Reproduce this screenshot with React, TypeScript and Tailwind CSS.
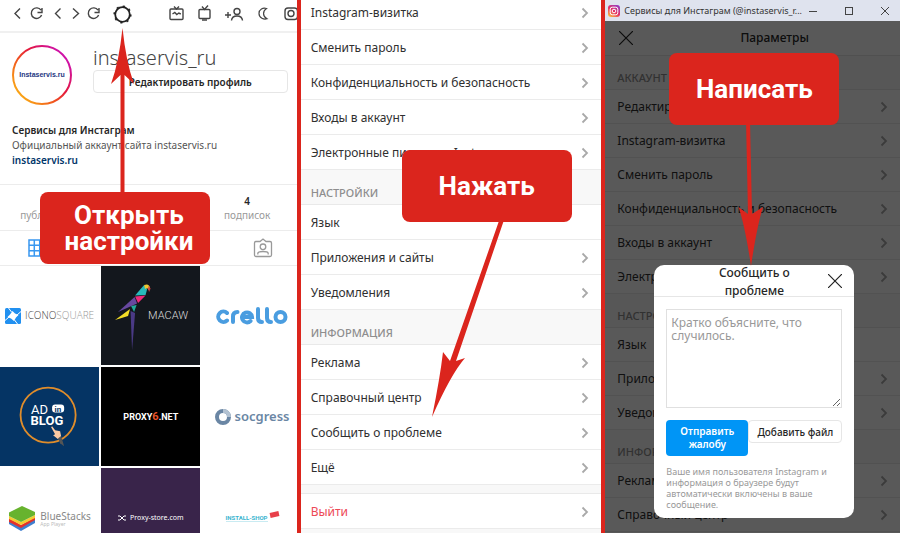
import React from "react";

const Chevron = () => (
  <svg viewBox="0 0 8 12" className="h-3 w-2 shrink-0" fill="none" stroke="#a9a9a9" strokeWidth="1.8">
    <path d="M1.5 1.5 6 6l-4.500 4.500" />
  </svg>
);

const Cross = () => (
  <svg viewBox="0 0 14 14" className="h-[14px] w-[14px]" stroke="#222" strokeWidth="1.2">
    <path d="m0 0 14 14M14 0 0 14" />
  </svg>
);

function Row({ label, arrow = true, tall = false, danger = false }: { label: string; arrow?: boolean; tall?: boolean; danger?: boolean }) {
  return (
    <a
      href="#"
      className={`flex shrink-0 items-center justify-between whitespace-nowrap border-b border-[#ebebeb] pr-3 text-[12px] leading-4 ${
        tall ? "h-[35px] pl-[10px] pt-0.5" : "h-[34px] pl-3"
      } ${danger ? "text-[#ed4956]" : "text-[#303030]"}`}
    >
      {label}
      {arrow && <Chevron />}
    </a>
  );
}

function Heading({ label, tall = false }: { label: string; tall?: boolean }) {
  return (
    <h2
      className={`flex shrink-0 items-end border-b border-[#e9e9e9] bg-[#f8f8f8] pb-[3px] text-[11px] font-medium leading-4 text-[#8e8e8e] ${
        tall ? "h-[35px] pl-[10px]" : "h-[34px] pl-3"
      }`}
    >
      {label}
    </h2>
  );
}

function Callout({ children, className }: { children: React.ReactNode; className: string }) {
  return (
    <div
      className={`absolute flex h-[72px] w-[170px] items-center justify-center rounded-lg bg-[#db251d] text-center font-['Roboto',sans-serif] text-[26px] font-bold leading-[26px] text-white ${className}`}
    >
      {children}
    </div>
  );
}

const ToolbarIcons = () => (
  <div className="flex h-[33px] shrink-0 items-start border-b-2 border-[#f0f0f0]">
    <svg viewBox="0 0 297 28" className="h-7 w-[297px] shrink-0" fill="none" stroke="#444" strokeWidth="1.4">
      <path d="M20 8.500l-5 5 5 5M60.500 8.500l-5 5 5 5M73 8.500l5.500 5-5.500 5" />
      <path d="M41 10.200A5.300 5.300 0 1 0 41.600 15M42 8v4.500h-4.500M98 10.200A5.300 5.300 0 1 0 98.600 15M99 8v4.500h-4.500" />
      <circle cx="122.500" cy="14.500" r="7.300" stroke="#222" strokeWidth="1.800" />
      <circle cx="122.500" cy="14.500" r="8.300" stroke="#222" strokeWidth="1.600" strokeDasharray="2.200 4.320" />
      <rect x="170" y="9" width="13" height="10.500" rx="1" />
      <path d="m174 6.500 2.500 2.500L179 6.500M172.500 14l2.300-1.500 2 2 2-1.500 2 1" />
      <rect x="199" y="9.500" width="11" height="9" rx="1" />
      <path d="m202 6.500 2.500 3 3.500-4M202 20h5" />
      <path d="M225 15h6M228 12v6" />
      <circle cx="237" cy="11.500" r="3" />
      <path d="M231.500 20.500c.5-6 10.500-6 11 0" />
      <path d="M267 18.800c-3 1-8-.8-8-5.300s4-6 7.500-5c-4 2.500-4 8 .5 10.300Z" strokeWidth="1.200" />
      <rect x="285" y="8" width="12.500" height="11.500" rx="3" />
      <circle cx="291" cy="13.500" r="3" />
    </svg>
  </div>
);

const Tile = ({ children, className = "" }: { children: React.ReactNode; className?: string }) => (
  <a href="#" className={`flex aspect-square items-center justify-center overflow-hidden whitespace-nowrap ${className}`}>
    {children}
  </a>
);

function Profile() {
  return (
    <section className="relative flex min-w-0 flex-col overflow-hidden bg-white">
      <ToolbarIcons />
      <div className="flex shrink-0 gap-[21px] pl-3 pr-[9px] pt-3">
        <svg viewBox="0 0 60 60" className="h-[60px] w-[60px] shrink-0" role="img">
          <defs>
            <linearGradient id="ring" x1="0.1" y1="0.9" x2="0.9" y2="0.2">
              <stop offset="0" stopColor="#fbb016" />
              <stop offset="0.4" stopColor="#f0531f" />
              <stop offset="0.65" stopColor="#e3173f" />
              <stop offset="1" stopColor="#cf12a8" />
            </linearGradient>
          </defs>
          <circle cx="30" cy="30" r="29" fill="white" stroke="url(#ring)" strokeWidth="2" />
          <text x="30" y="32" textAnchor="middle" fontFamily="Liberation Sans, sans-serif" fontSize="7" fontWeight="700" fill="#26377f">
            Instaservis.ru
          </text>
        </svg>
        <div className="min-w-0 flex-1">
          <h1 className="text-[20px] font-light leading-[25px] text-[#444]">instaservis_ru</h1>
          <button className="block h-[23px] w-full rounded-sm border border-[#e6e6e6] text-[10px] font-semibold leading-4 text-[#262626]">
            Редактировать профиль
          </button>
        </div>
      </div>
      <div className="mt-[18px] shrink-0 pl-3 text-[10px] leading-[15px] text-[#555]">
        <p className="font-semibold text-[#262626]">Сервисы для Инстаграм</p>
        <p>Официальный аккаунт сайта instaservis.ru</p>
        <a href="#" className="font-semibold text-[#003569]">instaservis.ru</a>
      </div>
      <div className="mt-4 grid h-[47px] shrink-0 grid-cols-3 items-end border-y border-[#ececec] pb-2 text-center text-[10px] leading-[14px] text-[#999]">
        <p>публикаций</p>
        <p>подписчиков</p>
        <p>
          <b className="block font-semibold text-[#262626]">4</b>подписок
        </p>
      </div>
      <div className="flex h-[35px] shrink-0 items-center justify-between border-b border-[#ececec] pl-7 pr-6">
        <svg viewBox="0 0 18 18" className="h-[18px] w-[18px]" fill="none" stroke="#3897f0" strokeWidth="1.500">
          <path d="M1 1h16v16H1zM6.300 1v16M11.700 1v16M1 6.300h16M1 11.700h16" />
        </svg>
        <svg viewBox="0 0 20 20" className="h-5 w-5" fill="none" stroke="#999" strokeWidth="1.300">
          <path d="M3 3.500h4L10 1l3 2.500h4a1.500 1.500 0 0 1 1.500 1.500v12a1.500 1.500 0 0 1-1.500 1.500H3A1.500 1.500 0 0 1 1.500 17V5A1.500 1.500 0 0 1 3 3.500Z" />
          <circle cx="10" cy="8.800" r="2.800" />
          <path d="M4.800 16.500v-1c0-1.500 1.700-2 5.200-2s5.200.5 5.200 2v1" />
        </svg>
      </div>
      <div className="-mr-[5px] grid shrink-0 grid-cols-3 gap-0.5">
        <Tile className="gap-1 font-['Open_Sans',sans-serif] text-[10px] font-light text-[#444]">
          <svg viewBox="0 0 16 16" className="h-4 w-4">
            <rect width="16" height="16" rx="1.500" fill="#2190f0" />
            <path d="M7.500 3 10 5.500 13.500 7 11 9.500l-2 3.500-3-2.500L2.500 9 5 6.500Z" fill="white" />
            <path d="m3.500 0 3 4M12.500 16l-3-4M0 12.500 4 9M16 3.500 12 7" stroke="white" />
          </svg>
          <span>ICONO<span className="text-[#999]">SQUARE</span></span>
        </Tile>
        <Tile className="bg-[#13171d]">
          <svg viewBox="0 0 99 99" className="h-full w-full">
            <path d="m43 19-9 10.500 10.500-.5 1.500-6Z" fill="#28b9bb" />
            <path d="M43 19q5-2 6 3l-1.500 2-1.500-2-2 1Z" fill="#efc62f" />
            <path d="m47.500 20 2 2.500-1.500 3.500-1-3Z" fill="#cf3b42" />
            <path d="m34 30.500 10.500-1-7.500 7.500Z" fill="#ed2a79" />
            <path d="m33.500 31 2.500 6.500L17 46Z" fill="#67489f" />
            <path d="M29 43 14 54l13-4Z" fill="#f2dc27" />
            <path d="m30 40 5.500-1-2.500 7Z" fill="#21aa9a" />
            <path d="m29.500 45 4.500 2-3 37Z" fill="#4a3a85" />
            <text x="47" y="53" fontFamily="Roboto, sans-serif" fontSize="11" fontWeight="300" fill="#ddd">MACAW</text>
          </svg>
        </Tile>
        <Tile>
          <svg viewBox="0 0 72 18" className="h-[18px] w-[72px]" fill="none" stroke="#4a9de0" strokeWidth="4" strokeLinecap="round">
            <path d="M11 6a5.200 5.200 0 1 0 0 7.500M17 15V9.500Q17 5 21.500 5M27 10h9a5 5 0 1 0-1.500 4M42 2v9q0 4 4 4M51 2v9q0 4 4 4" />
            <circle cx="64.500" cy="10" r="5" />
          </svg>
        </Tile>
        <Tile className="bg-[#053464]">
          <svg viewBox="0 0 99 99" className="h-full w-full">
            <circle cx="48" cy="48" r="27.500" fill="none" stroke="#e08d2b" strokeWidth="1.800" />
            <text x="31" y="46.500" fontFamily="Roboto, sans-serif" fontSize="13" fill="white">AD</text>
            <rect x="52" y="37.500" width="12" height="8" rx="3" fill="white" />
            <text x="54.500" y="44.500" fontFamily="Roboto, sans-serif" fontSize="8" fontWeight="700" fill="#053464">in</text>
            <text x="30.500" y="57.500" fontFamily="Roboto, sans-serif" fontSize="13" fontWeight="700" fill="white">BLOG</text>
            <path d="m51 60 4 7-2 1 5 4 3-3-1-5-5-1-3-4Z" fill="#fac9a3" />
            <path d="m58 71 3-2 3 10-4-3Z" fill="#555" />
          </svg>
        </Tile>
        <Tile className="bg-black font-['Roboto',sans-serif] text-[9px] font-bold text-white">
          <span>PROXY<span className="text-[11px] text-[#e8532a]">6</span>.NET</span>
        </Tile>
        <Tile className="gap-1 text-[13px] font-semibold text-[#6a86a4]">
          <svg viewBox="0 0 16 16" className="h-4 w-4" fill="none" strokeWidth="4">
            <circle cx="8" cy="8" r="6" stroke="#6a86a4" />
            <path d="M8 2a6 6 0 0 1 6 6" stroke="#b3c2d2" />
          </svg>
          socgress
        </Tile>
        <Tile className="gap-1 text-[10px] text-[#888]">
          <svg viewBox="0 0 28 25" className="h-[25px] w-7 shrink-0">
            <path d="m1 14 12 7 14-8v4l-14 8L1 18Z" fill="#3f7fd0" />
            <path d="m1 12 12 7 14-8v3l-14 8L1 16Z" fill="#e4312b" />
            <path d="m1 10 12 6 14-7v3l-14 7L1 13Z" fill="#f4cc32" />
            <path d="M1 6.500 14 0l13 6v3l-14 7L1 10Z" fill="#67b32e" />
          </svg>
          <span className="flex flex-col leading-3">
            BlueStacks
            <span className="text-[5px] leading-[5px] text-[#bbb]">App Player</span>
          </span>
        </Tile>
        <Tile className="gap-1 bg-[#39244a] text-[7px] text-white">
          <svg viewBox="0 0 8 6" className="h-[6px] w-2" fill="none" stroke="white">
            <path d="M0 1h2l4 4h2M0 5h2l4-4h2" />
          </svg>
          Proxy-store.com
        </Tile>
        <Tile className="gap-0.5 font-['Roboto',sans-serif] text-[6px] font-bold text-[#39b4cf]">
          <span className="border-b border-[#c9ebf2] leading-[7px]">INSTALL-SHOP</span>
          <span className="mb-2 h-[5px] w-[9px] -rotate-12 bg-[#e8404a]" />
        </Tile>
      </div>
      <svg viewBox="0 0 30 170" className="absolute left-[108px] top-[28px] h-[170px] w-[30px]" fill="#db251d">
        <path d="M14.500 0Q18 34 26 56l-9.500-9V170h-4V47L3 56Q11 34 14.500 0Z" />
      </svg>
      <Callout className="left-10 top-48 pl-2">Открыть<br />настройки</Callout>
    </section>
  );
}

function Settings() {
  return (
    <section className="relative flex min-w-0 flex-col overflow-hidden bg-[#f8f8f8]">
      <div className="-mt-[5px] shrink-0 bg-white">
        <Row tall label="Instagram-визитка" />
        <Row tall label="Сменить пароль" />
        <Row tall label="Конфиденциальность и безопасность" />
        <Row tall label="Входы в аккаунт" />
        <Row tall label="Электронные письма от Instagram" />
        <Heading tall label="НАСТРОЙКИ" />
        <Row tall label="Язык" arrow={false} />
        <Row tall label="Приложения и сайты" />
        <Row tall label="Уведомления" />
        <Heading tall label="ИНФОРМАЦИЯ" />
        <Row tall label="Реклама" />
        <Row tall label="Справочный центр" />
        <Row tall label="Сообщить о проблеме" />
        <Row tall label="Ещё" />
      </div>
      <div className="mt-2 border-t border-[#e9e9e9] bg-white">
        <Row tall danger label="Выйти" />
      </div>
      <svg viewBox="0 0 80 200" className="absolute left-[130px] top-[218px] h-[200px] w-20" fill="#db251d">
        <path d="m69 0 4 2-48 141 9-3Q20 156 1 199 9 160 12 134l7 9Z" />
      </svg>
      <Callout className="left-[101px] top-[150px]">Нажать</Callout>
    </section>
  );
}

function Options() {
  return (
    <section className="relative flex min-w-0 flex-col overflow-hidden bg-white">
      <div className="flex h-[21px] shrink-0 items-center justify-between bg-[#dfe3ee] pl-[3px] pr-[11px] text-[9px] text-[#333]">
        <div className="flex items-center gap-1 whitespace-nowrap">
          <svg viewBox="0 0 12 12" className="h-3 w-3 shrink-0" fill="none" stroke="white">
            <defs>
              <linearGradient id="insta" x1="0.1" y1="1" x2="0.8" y2="0">
                <stop offset="0" stopColor="#fdc43c" />
                <stop offset="0.5" stopColor="#e62f62" />
                <stop offset="1" stopColor="#923bc4" />
              </linearGradient>
            </defs>
            <rect width="12" height="12" rx="3" fill="url(#insta)" stroke="none" />
            <rect x="2.200" y="2.200" width="7.600" height="7.600" rx="2" />
            <circle cx="6" cy="6" r="1.800" />
          </svg>
          Сервисы для Инстаграм (@instaservis_r...
        </div>
        <svg viewBox="0 0 80 10" className="h-[10px] w-20 shrink-0" fill="none" stroke="#444">
          <path d="M0 5.500h8M72 1l8 8M80 1l-8 8" />
          <rect x="36.500" y="1.500" width="7" height="7" />
        </svg>
      </div>
      <div className="relative min-h-0 flex-1 overflow-hidden">
        <div className="flex h-[35px] items-center border-b border-[#e6e6e6] pl-[14px]">
          <Cross />
          <h1 className="flex-1 pl-4 text-center text-[12px] font-medium leading-4 text-[#262626]">Параметры</h1>
        </div>
        <Heading label="АККАУНТ" />
        <Row label="Редактировать профиль" />
        <Row label="Instagram-визитка" />
        <Row label="Сменить пароль" />
        <Row label="Конфиденциальность и безопасность" />
        <Row label="Входы в аккаунт" />
        <Row label="Электронные письма от Instagram" />
        <Heading label="НАСТРОЙКИ" />
        <Row label="Язык" arrow={false} />
        <Row label="Приложения и сайты" />
        <Row label="Уведомления" />
        <Heading label="ИНФОРМАЦИЯ" />
        <Row label="Реклама" />
        <Row label="Справочный центр" />
        <div className="absolute inset-0 bg-black/65" />
      </div>
      <form className="absolute left-[49px] top-[265px] w-[200px] rounded-[10px] bg-white pb-2">
        <div className="relative h-[33px] border-b border-[#e6e6e6] text-center text-[12px] font-medium leading-[18px] text-[#262626]">
          <label htmlFor="problem" className="-mt-px block">Сообщить о<br />проблеме</label>
          <button type="button" aria-label="Закрыть" className="absolute right-3 top-[10px]">
            <Cross />
          </button>
        </div>
        <div className="px-3 pt-3">
          <textarea id="problem" placeholder="Кратко объясните, что случилось." className="block h-[99px] w-full border border-[#e0e0e0] px-1 py-[6px] text-[12px] leading-[13px] placeholder:text-[#999]" />
          <div className="mt-3 flex items-start">
            <button type="submit" className="h-9 w-[82px] shrink-0 rounded-sm bg-[#0095f6] text-[10px] font-semibold leading-[13px] text-white">Отправить жалобу</button>
            <button type="button" className="h-[23px] flex-1 whitespace-nowrap rounded-sm border border-[#e6e6e6] text-[10px] font-medium leading-4 text-[#262626]">Добавить файл</button>
          </div>
          <p className="mt-[10px] text-[9px] leading-[11px] text-[#999]">Ваше имя пользователя Instagram и информация о браузере будут автоматически включены в ваше сообщение.</p>
        </div>
      </form>
      <svg viewBox="0 0 26 146" className="absolute left-[133px] top-[120px] h-[146px] w-[26px]" fill="#db251d">
        <path d="M8 0h4l2 94 11-7Q19 106 13 146 7 106 .5 87l9.500 7Z" />
      </svg>
      <Callout className="left-16 top-[53px]">Написать</Callout>
    </section>
  );
}

export default function App() {
  return (
    <main className="grid h-screen grid-cols-[297fr_301fr_295fr] gap-1 overflow-hidden bg-[#db251d] font-['Noto_Sans',sans-serif]">
      <Profile />
      <Settings />
      <Options />
    </main>
  );
}
